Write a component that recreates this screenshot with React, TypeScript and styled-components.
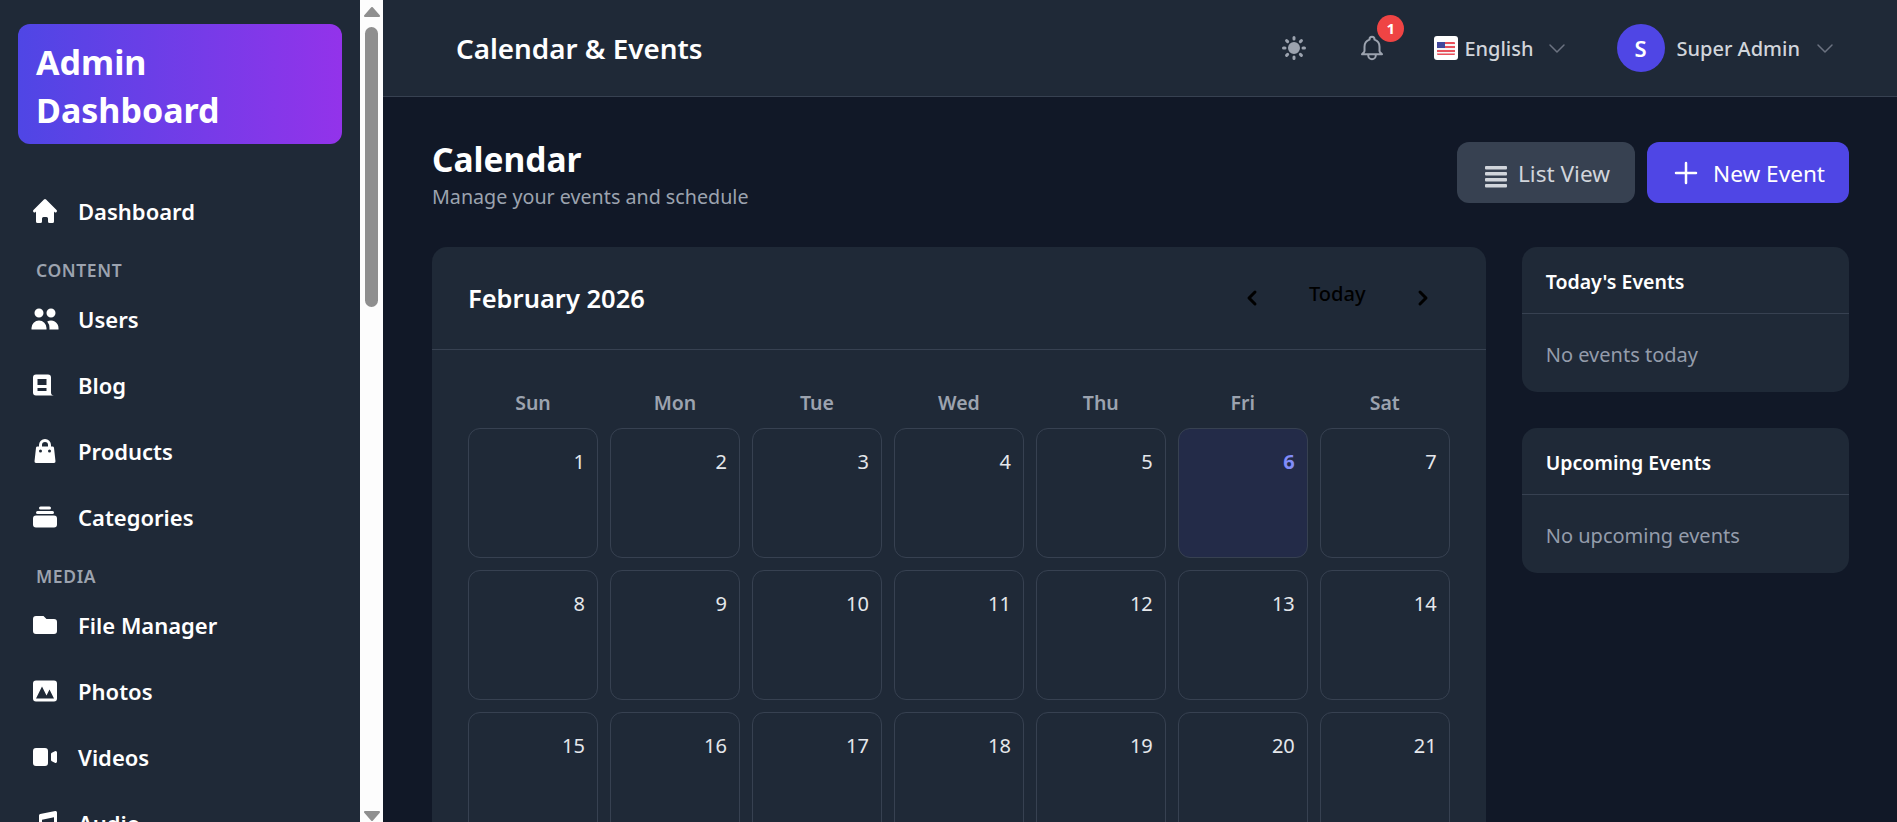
import styled, { createGlobalStyle } from "styled-components";
import type { ReactNode } from "react";
import {
  HiHome,
  HiUsers,
  HiShoppingBag,
  HiCollection,
  HiFolder,
  HiPhotograph,
  HiVideoCamera,
  HiMusicNote,
  HiSun,
  HiOutlineBell,
  HiOutlineChevronDown,
  HiChevronLeft,
  HiChevronRight,
  HiOutlinePlus,
} from "react-icons/hi";

const FONT = `"Noto Sans", "Open Sans", sans-serif`;

const GlobalStyle = createGlobalStyle`
  html, body {
    margin: 0;
    height: 100%;
    overflow: hidden;
    background: #111827;
    font-family: ${FONT};
  }
  * { box-sizing: border-box; }
`;

const Shell = styled.div`
  display: flex;
  height: 100vh;
  overflow: hidden;
`;

const Sidebar = styled.aside`
  width: 360px;
  flex: none;
  background: #1f2937;
  padding: 24px 18px 0;
  overflow: hidden;
`;

const Logo = styled.div`
  height: 120px;
  padding: 14px 18px 0;
  border-radius: 12px;
  background: linear-gradient(to right, #4f46e5, #9333ea);
  color: #fff;
  font-size: 34px;
  font-weight: 700;
  line-height: 48px;
`;

const Nav = styled.nav`
  margin-top: 34px;
  display: flex;
  flex-direction: column;
`;

const NavRow = styled.a`
  display: flex;
  align-items: center;
  height: 66px;
  flex: none;
  padding-left: 12px;
  color: #fff;
  font-size: 22px;
  font-weight: 600;
  svg {
    width: 30px;
    height: 30px;
    flex: none;
    margin-right: 18px;
  }
`;

const NavLabel = styled.div`
  height: 42px;
  padding: 13px 0 0 18px;
  color: #9ca3af;
  font-size: 17.5px;
  font-weight: 600;
  line-height: 27px;
  letter-spacing: 0.6px;
  text-transform: uppercase;
`;

const ScrollTrack = styled.div`
  width: 23.4px;
  flex: none;
  background: #fdfdfd;
  display: flex;
  flex-direction: column;
  align-items: center;
  padding: 7px 0 1px;
`;

const ScrollThumb = styled.div`
  width: 13px;
  height: 280px;
  margin-top: 10px;
  border-radius: 7px;
  background: #8f8f8f;
`;

const ScrollArrow = styled.svg`
  width: 16px;
  height: 10px;
  flex: none;
  fill: #8f8f8f;
  stroke: #8f8f8f;
  stroke-width: 2;
  stroke-linejoin: round;
`;

const ScrollGap = styled.div`
  flex: 1;
`;

const Body = styled.div`
  flex: 1;
  min-width: 0;
  display: flex;
  flex-direction: column;
`;

const TopBar = styled.header`
  height: 97px;
  flex: none;
  display: flex;
  align-items: center;
  padding: 0 60px 0 72.6px;
  background: #1f2937;
  border-bottom: 1px solid #374151;
`;

const TopTitle = styled.h1`
  flex: 1;
  margin: 0;
  color: #fff;
  font-size: 27.8px;
  font-weight: 600;
`;

const SunIcon = styled(HiSun)`
  width: 30px;
  height: 30px;
  color: #9ca3af;
  margin-right: 48px;
`;

const BellBox = styled.div`
  position: relative;
  width: 30px;
  height: 30px;
  margin-right: 47px;
  color: #9ca3af;
  svg {
    width: 30px;
    height: 30px;
  }
  svg path {
    stroke-width: 1.6;
  }
`;

const Badge = styled.span`
  position: absolute;
  top: -18px;
  left: 20px;
  width: 27px;
  height: 27px;
  border-radius: 50%;
  background: #ef4444;
  color: #fff;
  font-size: 15px;
  font-weight: 700;
  line-height: 27px;
  text-align: center;
`;

const FlagBox = styled.span`
  width: 24px;
  height: 24px;
  border-radius: 3px;
  background: #fff;
  display: flex;
  align-items: center;
  justify-content: center;
  margin-right: 6px;
`;

const TopText = styled.span`
  color: #d1d5db;
  font-size: 20px;
  font-weight: 500;
`;

const Caret = styled(HiOutlineChevronDown)<{ $left: number; $right: number }>`
  width: 24px;
  height: 24px;
  color: #6b7280;
  margin-left: ${(p) => p.$left}px;
  margin-right: ${(p) => p.$right}px;
  path {
    stroke-width: 1.5;
  }
`;

const Avatar = styled.div`
  width: 48px;
  height: 48px;
  border-radius: 50%;
  background: #4f46e5;
  color: #fff;
  font-size: 22px;
  font-weight: 600;
  line-height: 48px;
  text-align: center;
  margin-right: 12px;
`;

const Content = styled.main`
  flex: 1;
  min-height: 0;
  overflow: hidden;
  padding: 45px 48px 0 48.6px;
  background: #111827;
`;

const PageHead = styled.div`
  display: flex;
  justify-content: space-between;
  height: 105px;
`;

const PageTitle = styled.h2`
  margin: 0;
  color: #fff;
  font-size: 33.5px;
  font-weight: 700;
  line-height: 34px;
`;

const PageSub = styled.p`
  margin: 6px 0 0;
  color: #9ca3af;
  font-size: 19.7px;
  line-height: 30px;
`;

const Actions = styled.div`
  display: flex;
  gap: 12px;
`;

const ActionButton = styled.button<{ $primary?: boolean }>`
  height: 61px;
  display: flex;
  align-items: center;
  gap: ${(p) => (p.$primary ? 12 : 7)}px;
  padding: 2px ${(p) => (p.$primary ? 24 : 25)}px 0 24px;
  border: 0;
  border-radius: 12px;
  font-family: ${FONT};
  font-size: 22.6px;
  background: ${(p) => (p.$primary ? "#4f46e5" : "#374151")};
  color: ${(p) => (p.$primary ? "#fff" : "#d1d5db")};
  svg {
    width: 30px;
    height: 30px;
    flex: none;
    margin-top: -2px;
  }
`;

const Columns = styled.div`
  display: grid;
  grid-template-columns: repeat(4, 1fr);
  gap: 36px;
  align-items: start;
`;

const CalendarCard = styled.section`
  grid-column: span 3;
  background: #1f2937;
  border-radius: 15px;
`;

const CalendarHead = styled.div`
  height: 103px;
  display: flex;
  align-items: center;
  justify-content: space-between;
  padding: 0 48px 0 36px;
  border-bottom: 1px solid #374151;
`;

const MonthTitle = styled.h3`
  margin: 0;
  color: #fff;
  font-size: 25.5px;
  font-weight: 600;
`;

const MonthNav = styled.div`
  display: flex;
  align-items: center;
  color: #000;
  svg {
    width: 30px;
    height: 30px;
  }
`;

const TodayLabel = styled.span`
  width: 141px;
  text-align: center;
  font-size: 20px;
  font-weight: 500;
  transform: translateY(-5px);
`;

const CalendarBody = styled.div`
  display: grid;
  grid-template-columns: repeat(7, 1fr);
  gap: 12px;
  padding: 36px 36px 36px;
`;

const DayName = styled.div`
  height: 30px;
  color: #9ca3af;
  font-size: 19.5px;
  font-weight: 600;
  line-height: 33px;
  text-align: center;
`;

const DayCell = styled.div<{ $today?: boolean }>`
  height: 130px;
  padding: 18px 12px;
  border: 1px solid #374151;
  border-radius: 12px;
  text-align: right;
  font-size: 20px;
  line-height: 30px;
  background: ${(p) => (p.$today ? "rgba(79, 70, 229, 0.1)" : "transparent")};
  color: ${(p) => (p.$today ? "#818cf8" : "#e5e7eb")};
  font-weight: ${(p) => (p.$today ? 700 : 400)};
`;

const SideColumn = styled.div`
  display: flex;
  flex-direction: column;
  gap: 36px;
`;

const SideCard = styled.section`
  background: #1f2937;
  border-radius: 15px;
`;

const SideHead = styled.h3`
  height: 67px;
  margin: 0;
  padding: 0 24px;
  border-bottom: 1px solid #374151;
  color: #fff;
  font-size: 19.5px;
  font-weight: 600;
  line-height: 69px;
`;

const SideEmpty = styled.p`
  height: 78px;
  margin: 0;
  padding: 3px 24px 0;
  color: #949cab;
  font-size: 20px;
  line-height: 75px;
`;

const UsFlag = () => (
  <svg width="18" height="13" viewBox="0 0 18 13">
    <rect width="18" height="13" rx="1" fill="#e8505b" />
    <rect y="2" width="18" height="2" fill="#f5f5f5" />
    <rect y="6" width="18" height="2" fill="#f5f5f5" />
    <rect y="10" width="18" height="1.5" fill="#f5f5f5" />
    <rect width="8" height="6" fill="#41479b" />
  </svg>
);

const BlogIcon = () => (
  <svg viewBox="0 0 20 20" fill="currentColor">
    <path
      fillRule="evenodd"
      d="M2 5a2 2 0 012-2h8a2 2 0 012 2v10a2 2 0 002 2H4a2 2 0 01-2-2V5zm3 1h6v4H5V6zm6 6H5v2h6v-2z"
      clipRule="evenodd"
    />
  </svg>
);

const ListIcon = () => (
  <svg viewBox="0 0 30 30" fill="currentColor">
    <rect x="4" y="8" width="22" height="3.4" rx="1" />
    <rect x="4" y="14" width="22" height="3.4" rx="1" />
    <rect x="4" y="20" width="22" height="3.4" rx="1" />
    <rect x="4" y="26" width="22" height="3.4" rx="1" />
  </svg>
);

type NavEntry = { label: string; icon?: ReactNode; section?: boolean };

const navEntries: NavEntry[] = [
  { label: "Dashboard", icon: <HiHome /> },
  { label: "Content", section: true },
  { label: "Users", icon: <HiUsers /> },
  { label: "Blog", icon: <BlogIcon /> },
  { label: "Products", icon: <HiShoppingBag /> },
  { label: "Categories", icon: <HiCollection /> },
  { label: "Media", section: true },
  { label: "File Manager", icon: <HiFolder /> },
  { label: "Photos", icon: <HiPhotograph /> },
  { label: "Videos", icon: <HiVideoCamera /> },
  { label: "Audio", icon: <HiMusicNote /> },
];

const dayNames = ["Sun", "Mon", "Tue", "Wed", "Thu", "Fri", "Sat"];
const days = Array.from({ length: 28 }, (_, i) => i + 1);

export default function App() {
  return (
    <Shell>
      <GlobalStyle />
      <Sidebar>
        <Logo>Admin Dashboard</Logo>
        <Nav>
          {navEntries.map((entry) =>
            entry.section ? (
              <NavLabel key={entry.label}>{entry.label}</NavLabel>
            ) : (
              <NavRow key={entry.label}>
                {entry.icon}
                {entry.label}
              </NavRow>
            ),
          )}
        </Nav>
      </Sidebar>
      <ScrollTrack>
        <ScrollArrow viewBox="0 0 16 10">
          <path d="M8 1 15 9H1z" />
        </ScrollArrow>
        <ScrollThumb />
        <ScrollGap />
        <ScrollArrow viewBox="0 0 16 10">
          <path d="M1 1h14L8 9z" />
        </ScrollArrow>
      </ScrollTrack>
      <Body>
        <TopBar>
          <TopTitle>Calendar &amp; Events</TopTitle>
          <SunIcon />
          <BellBox>
            <HiOutlineBell />
            <Badge>1</Badge>
          </BellBox>
          <FlagBox>
            <UsFlag />
          </FlagBox>
          <TopText>English</TopText>
          <Caret $left={11} $right={48} />
          <Avatar>S</Avatar>
          <TopText>Super Admin</TopText>
          <Caret $left={13} $right={0} />
        </TopBar>
        <Content>
          <PageHead>
            <div>
              <PageTitle>Calendar</PageTitle>
              <PageSub>Manage your events and schedule</PageSub>
            </div>
            <Actions>
              <ActionButton>
                <ListIcon />
                List View
              </ActionButton>
              <ActionButton $primary>
                <HiOutlinePlus />
                New Event
              </ActionButton>
            </Actions>
          </PageHead>
          <Columns>
            <CalendarCard>
              <CalendarHead>
                <MonthTitle>February 2026</MonthTitle>
                <MonthNav>
                  <HiChevronLeft />
                  <TodayLabel>Today</TodayLabel>
                  <HiChevronRight />
                </MonthNav>
              </CalendarHead>
              <CalendarBody>
                {dayNames.map((d) => (
                  <DayName key={d}>{d}</DayName>
                ))}
                {days.map((d) => (
                  <DayCell key={d} $today={d === 6}>
                    {d}
                  </DayCell>
                ))}
              </CalendarBody>
            </CalendarCard>
            <SideColumn>
              <SideCard>
                <SideHead>Today's Events</SideHead>
                <SideEmpty>No events today</SideEmpty>
              </SideCard>
              <SideCard>
                <SideHead>Upcoming Events</SideHead>
                <SideEmpty>No upcoming events</SideEmpty>
              </SideCard>
            </SideColumn>
          </Columns>
        </Content>
      </Body>
    </Shell>
  );
}
